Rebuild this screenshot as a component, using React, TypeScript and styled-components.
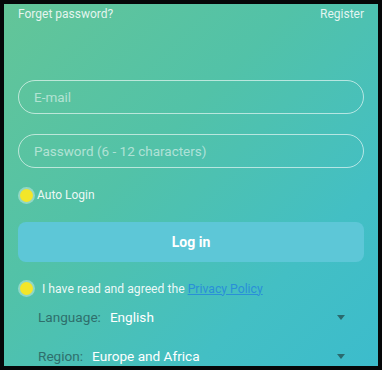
import styled, { createGlobalStyle } from "styled-components"

const Global = createGlobalStyle`
  html, body { margin: 0; padding: 0; background: #000; }
  body { font-family: Roboto, "Noto Sans", sans-serif; }
`

export default function App() {
  return (
    <>
      <Global />
      <Frame>
        <Screen>
          <TopBar>
            <TopLink>Forget password?</TopLink>
            <TopLink>Register</TopLink>
          </TopBar>
          <Fields>
            <Field placeholder="E-mail" />
            <Field placeholder="Password (6 - 12 characters)" type="password" />
          </Fields>
          <CheckRow $gap={4} $top={20}>
            <Dot />
            <CheckText>Auto Login</CheckText>
          </CheckRow>
          <LoginButton>Log in</LoginButton>
          <CheckRow $gap={9} $top={20}>
            <Dot />
            <AgreeText>
              I have read and agreed the <Policy>Privacy Policy</Policy>
            </AgreeText>
          </CheckRow>
          <SelectRow>
            <SelectLabel>Language:</SelectLabel>
            <SelectValue>English</SelectValue>
            <Caret />
          </SelectRow>
          <SelectRow>
            <SelectLabel>Region:</SelectLabel>
            <SelectValue>Europe and Africa</SelectValue>
            <Caret />
          </SelectRow>
        </Screen>
      </Frame>
    </>
  )
}

const Frame = styled.div`
  width: 382px;
  height: 370px;
  padding: 4px;
  box-sizing: border-box;
  background: #050708;
`
const Screen = styled.div`
  width: 374px;
  height: 362px;
  overflow: hidden;
  background: linear-gradient(135deg, #63c598 0%, #52c2a8 40%, #43bfc4 75%, #3cbccc 100%);
  padding: 0 14px;
  box-sizing: border-box;
  display: flex;
  flex-direction: column;
`
const TopBar = styled.div`
  display: flex;
  justify-content: space-between;
  padding-top: 3px;
  height: 15px;
`
const TopLink = styled.span`
  font-size: 12px;
  color: rgba(255, 255, 255, 0.85);
  line-height: 15px;
`
const Fields = styled.div`
  display: flex;
  flex-direction: column;
  gap: 20px;
  margin-top: 58px;
`
const Field = styled.input`
  height: 34px;
  box-sizing: border-box;
  border: 1.5px solid rgba(255, 255, 255, 0.6);
  border-radius: 17px;
  background: transparent;
  padding: 0 15px;
  font-family: Roboto, sans-serif;
  font-size: 13.5px;
  color: #fff;
  outline: none;
  &::placeholder { color: rgba(255, 255, 255, 0.55); }
`
const CheckRow = styled.div<{ $gap: number; $top: number }>`
  display: flex;
  align-items: center;
  gap: ${p => p.$gap}px;
  margin-top: ${p => p.$top}px;
`
const Dot = styled.span`
  width: 13px;
  height: 13px;
  border-radius: 50%;
  background: #f3e62a;
  margin-left: 2px;
  box-shadow: 0 0 0 2px rgba(255, 255, 255, 0.35);
  flex-shrink: 0;
`
const CheckText = styled.span`
  font-size: 12px;
  color: rgba(255, 255, 255, 0.9);
`
const LoginButton = styled.button`
  margin-top: 20px;
  height: 40px;
  border: none;
  border-radius: 8px;
  background: #5dc7d7;
  color: #fff;
  font-family: Roboto, sans-serif;
  font-weight: 700;
  font-size: 14px;
`
const AgreeText = styled.span`
  font-size: 12.2px;
  color: rgba(255, 255, 255, 0.9);
`
const Policy = styled.a`
  color: #2a8fd8;
  text-decoration: underline;
`
const SelectRow = styled.div`
  display: flex;
  align-items: center;
  height: 20px;
  margin-top: 12px;
  padding: 0 19px 0 20px;
  font-size: 13.6px;
  & + & { margin-top: 19px; }
`
const SelectLabel = styled.span`
  color: #2f6f6c;
  margin-right: 9px;
`
const SelectValue = styled.span`
  color: #fff;
  flex: 1;
`
const Caret = styled.span`
  width: 0;
  height: 0;
  border-left: 4.5px solid transparent;
  border-right: 4.5px solid transparent;
  border-top: 5px solid #2a6a6e;
`
